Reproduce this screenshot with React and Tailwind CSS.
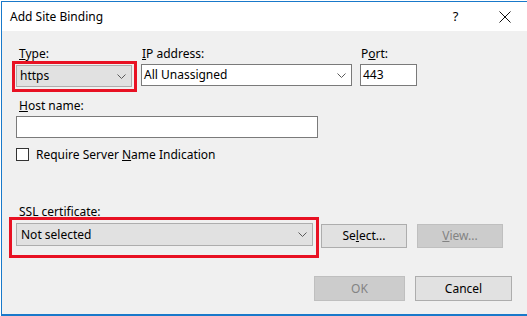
import React from "react";

const font = { fontFamily: '"Noto Sans", "Open Sans", sans-serif' };

// little down chevron used by the combo boxes
const Chevron = () => (
    <svg width="9" height="5" viewBox="0 0 9 5" className="shrink-0">
        <polyline points="0.5,0.5 4.5,4.5 8.5,0.5" fill="none" stroke="#5a5a5a" strokeWidth="1" />
    </svg>
);

const Combo = ({ text, className }) => (
    <div className={"flex items-center justify-between pr-[5px] " + className}>
        <span className="leading-none">{text}</span>
        <Chevron />
    </div>
);

const Btn = ({ children, disabled, className }) => (
    <div
        className={
            "flex items-center justify-center border " +
            (disabled ? "bg-[#cccccc] border-[#bfbfbf] text-[#838383] " : "bg-[#e1e1e1] border-[#adadad] text-black ") +
            className
        }
    >
        {children}
    </div>
);

const App = () => {
    return (
        <div className="w-[527px] h-[316px] bg-white pt-px pl-px text-[12px] text-black overflow-hidden" style={font}>
            <div className="h-[315px] flex flex-col border-t border-l border-b-2 border-[#1979ca]">

                {/* title bar */}
                <div className="h-[29px] bg-white flex items-center shrink-0">
                    <span className="pl-[8px] text-[12px]">Add Site Binding</span>
                    <div className="ml-auto w-[45px] flex justify-center text-[13px]">?</div>
                    <div className="ml-[4px] w-[45px] flex justify-center">
                        <svg width="12" height="12" viewBox="0 0 12 12">
                            <path d="M0.5 0.5 L11.5 11.5 M11.5 0.5 L0.5 11.5" stroke="#111" strokeWidth="1" />
                        </svg>
                    </div>
                </div>

                {/* dialog body */}
                <div className="flex-1 bg-[#f0f0f0] pl-[10px] pt-[15px] flex flex-col">

                    <div className="flex items-start">
                        <div className="flex flex-col">
                            <div className="h-[16px] leading-[16px] pl-[7px]"><u>T</u>ype:</div>
                            <div className="mt-[-1px] w-[125px] h-[31px] border-[3px] border-[#e81123] pl-px pt-px">
                                <Combo text="https" className="w-[116px] h-[22px] bg-[#e1e1e1] border border-[#adadad] pl-[3px]" />
                            </div>
                        </div>
                        <div className="flex flex-col ml-[4px]">
                            <div className="h-[16px] leading-[16px] pl-px"><u>I</u>P address:</div>
                            <Combo text="All Unassigned" className="mt-[2px] w-[211px] h-[22px] bg-white border border-[#7a7a7a] pl-[2px]" />
                        </div>
                        <div className="flex flex-col ml-[8px]">
                            <div className="h-[16px] leading-[16px] pl-px">P<u>o</u>rt:</div>
                            <div className="mt-[2px] w-[57px] h-[22px] bg-white border border-[#7a7a7a] pl-[2px] flex items-center">443</div>
                        </div>
                    </div>

                    <div className="mt-[6px] h-[16px] leading-[16px] pl-[7px]"><u>H</u>ost name:</div>
                    <div className="mt-[2px] ml-[4px] w-[302px] h-[22px] bg-white border border-[#7a7a7a]" />

                    <div className="mt-[10px] ml-[4px] h-[13px] flex items-center">
                        <div className="w-[13px] h-[13px] bg-white border border-[#333333]" />
                        <span className="ml-[7px] leading-none">Require Server <u>N</u>ame Indication</span>
                    </div>

                    <div className="mt-[43px] h-[16px] leading-[16px] pl-[7px]">SSL certificate:</div>
                    <div className="flex items-start">
                        <div className="mt-[-3px] ml-[-3px] w-[310px] h-[41px] border-[3px] border-[#e81123] pl-[4px] pt-[3px]">
                            <Combo text="Not selected" className="w-[297px] h-[23px] bg-[#e1e1e1] border border-[#adadad] pl-[4px]" />
                        </div>
                        <Btn className="mt-[4px] ml-[2px] w-[86px] h-[24px]">Se<u>l</u>ect...</Btn>
                        <Btn disabled className="mt-[4px] ml-[10px] w-[86px] h-[24px]"><u>V</u>iew...</Btn>
                    </div>

                    <div className="mt-[18px] flex justify-end pr-[15px] gap-[10px]">
                        <Btn disabled className="w-[91px] h-[25px]">OK</Btn>
                        <Btn className="w-[97px] h-[25px]">Cancel</Btn>
                    </div>
                </div>
            </div>
        </div>
    );
};

export default App;
